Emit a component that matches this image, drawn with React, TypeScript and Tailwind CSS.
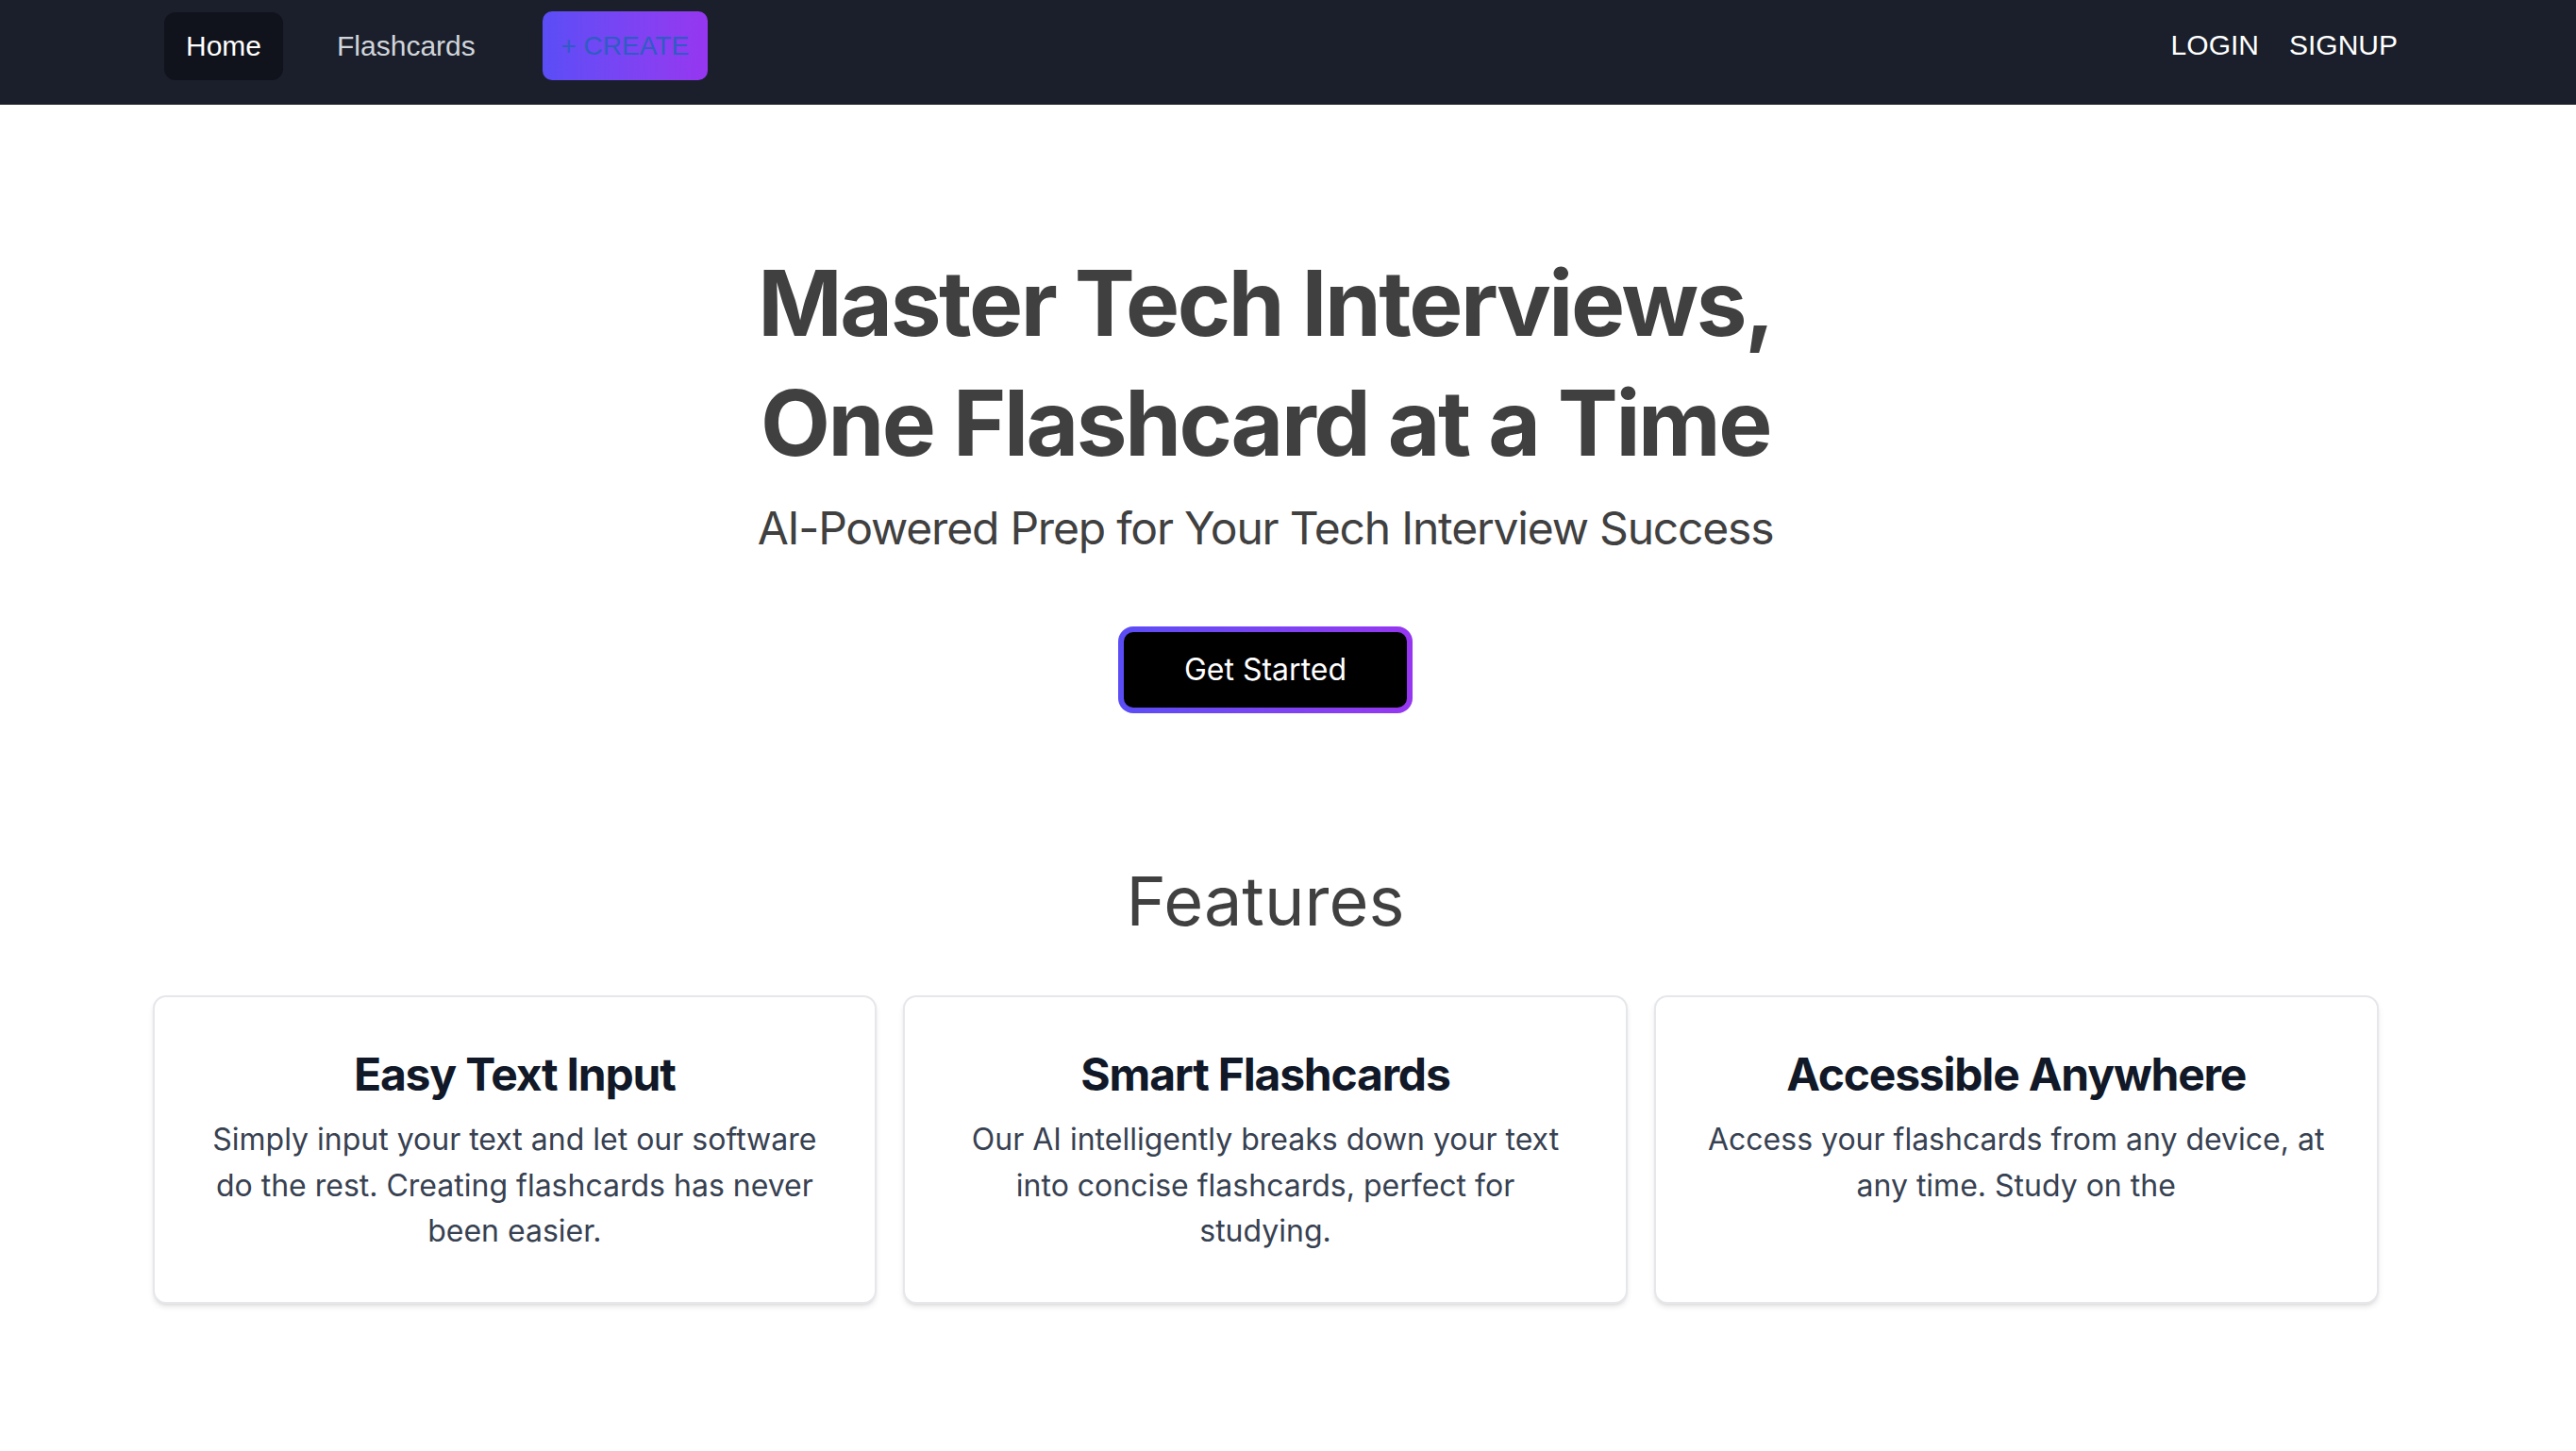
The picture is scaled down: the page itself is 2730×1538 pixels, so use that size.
const features = [
  {
    title: "Easy Text Input",
    body: "Simply input your text and let our software do the rest. Creating flashcards has never been easier.",
  },
  {
    title: "Smart Flashcards",
    body: "Our AI intelligently breaks down your text into concise flashcards, perfect for studying.",
  },
  {
    title: "Accessible Anywhere",
    body: "Access your flashcards from any device, at any time. Study on the",
  },
];

function NavBar() {
  return (
    <header className="w-full h-[111px] bg-[#1a1f2b] flex items-start justify-between pt-[12px] pl-[174px] pr-[189px] font-['Liberation_Sans',Arial,sans-serif] text-[30px]">
      <div className="flex items-center">
        <button className="h-[72px] px-[23px] rounded-[12px] bg-[#10131b] text-white">Home</button>
        <button className="ml-[57px] text-[#d1d5db]">Flashcards</button>
        <button className="ml-[71px] h-[73px] w-[175px] rounded-[10px] bg-gradient-to-r from-[#5a4df6] to-[#9636f0] text-[28px] text-[#2f5cc4]">
          + CREATE
        </button>
      </div>
      <div className="h-[70px] flex items-center gap-[32px] text-white">
        <button>LOGIN</button>
        <button>SIGNUP</button>
      </div>
    </header>
  );
}

export default function App() {
  return (
    <div className="w-full min-h-screen bg-white font-['Inter',sans-serif]">
      <NavBar />

      <main className="w-[2682px] flex flex-col items-center">
        <h1 className="mt-[147px] text-center text-[96px] leading-[127px] font-bold tracking-tight text-[#404040]">
          Master Tech Interviews,
          <br />
          One Flashcard at a Time
        </h1>
        <p className="mt-[18px] text-[48px] leading-[60px] tracking-tight text-[#404040]">
          AI-Powered Prep for Your Tech Interview Success
        </p>

        <div className="mt-[74px] p-[6px] rounded-[16px] bg-gradient-to-r from-[#5a4df6] to-[#9636f0]">
          <button className="w-[300px] h-[80px] rounded-[10px] bg-black text-white text-[32px]">
            Get Started
          </button>
        </div>

        <h2 className="mt-[154px] text-[72px] leading-[90px] text-[#404040]">Features</h2>

        <div className="mt-[55px] w-[2359px] grid grid-cols-3 gap-[28px]">
          {features.map((f) => (
            <div
              key={f.title}
              className="rounded-[14px] border-2 border-[#e5e7eb] bg-white shadow-md px-[48px] pt-[50px] pb-[50px] text-center"
            >
              <h3 className="text-[48px] leading-[64px] font-bold tracking-tight text-[#111827]">{f.title}</h3>
              <p className="mt-[13px] text-[32px] leading-[48.5px] text-[#374151]">{f.body}</p>
            </div>
          ))}
        </div>
      </main>
    </div>
  );
}
